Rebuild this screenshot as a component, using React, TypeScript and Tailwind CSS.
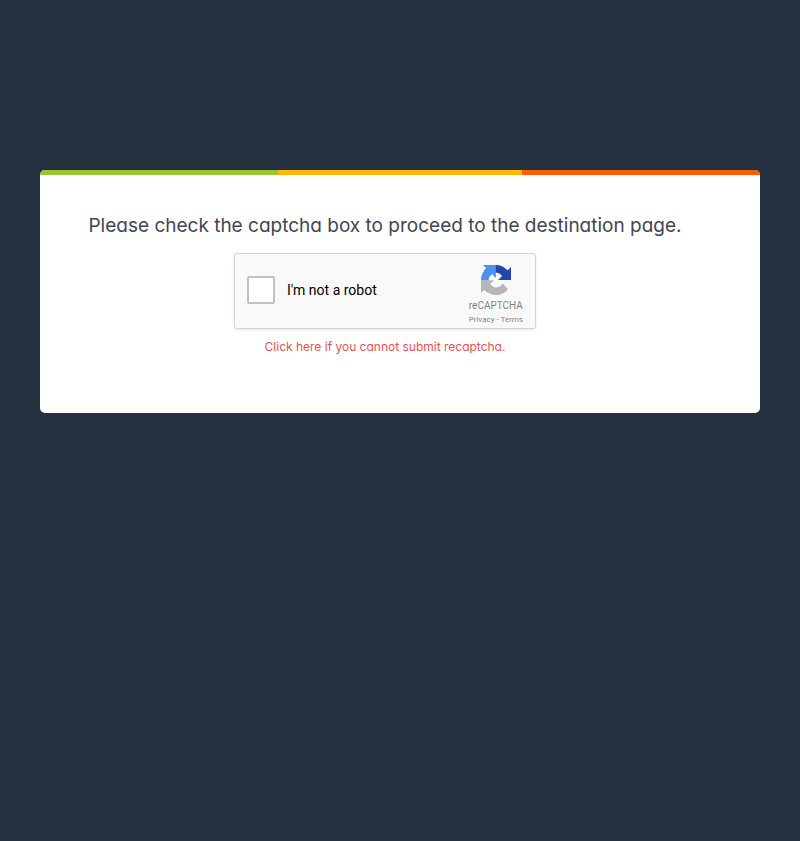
function RecaptchaLogo() {
  return (
    <svg viewBox="0 0 64 64" className="h-8 w-8 p-px" aria-hidden="true">
      <path
        fill="#2145ab"
        d="M64,31.955c-0.001,-0.46 -0.012,-0.918 -0.032,-1.373l0,-26.059l-7.205,7.204c-5.896,-7.218 -14.866,-11.824 -24.909,-11.824c-10.452,0 -19.738,4.987 -25.605,12.71l11.809,11.933c1.158,-2.14 2.802,-3.979 4.78,-5.365c2.058,-1.606 4.973,-2.918 8.991,-2.918c0.486,0 0.86,0.056 1.136,0.163c4.979,0.393 9.295,3.141 11.836,7.129l-8.359,8.36c10.588,-0.042 22.549,-0.066 27.558,0.04"
      />
      <path
        fill="#4a90ee"
        d="M31.862,0.094c-0.46,0.001 -0.918,0.012 -1.373,0.032l-26.059,0l7.204,7.205c-7.218,5.896 -11.824,14.866 -11.824,24.909c0,10.452 4.987,19.738 12.71,25.605l11.933,-11.809c-2.14,-1.158 -3.979,-2.802 -5.365,-4.78c-1.606,-2.058 -2.918,-4.973 -2.918,-8.991c0,-0.486 0.056,-0.86 0.163,-1.136c0.393,-4.979 3.141,-9.295 7.129,-11.836l8.36,8.359c-0.042,-10.588 -0.066,-22.549 0.04,-27.558"
      />
      <path
        fill="#b6b6b6"
        d="M0.001,32.24c0.001,0.46 0.012,0.918 0.032,1.373l0,26.059l7.205,-7.204c5.896,7.218 14.866,11.824 24.909,11.824c10.452,0 19.738,-4.987 25.605,-12.71l-11.809,-11.933c-1.158,2.14 -2.802,3.979 -4.78,5.365c-2.058,1.606 -4.973,2.918 -8.991,2.918c-0.486,0 -0.86,-0.056 -1.136,-0.163c-4.979,-0.393 -9.295,-3.141 -11.836,-7.129l8.359,-8.36c-10.588,0.042 -22.549,0.066 -27.558,-0.04"
      />
    </svg>
  );
}

function RecaptchaBox() {
  return (
    <div className="flex h-[76px] w-[302px] items-center justify-between rounded-[3px] border border-[#d3d3d3] bg-[#f9f9f9] px-3 font-[Roboto,sans-serif] shadow-[0_1px_3px_rgba(0,0,0,0.1)]">
      <div className="flex items-center gap-3 pb-0.5">
        <input
          id="not-a-robot"
          type="checkbox"
          className="h-7 w-7 appearance-none rounded-[2px] border-2 border-[#c1c1c1] bg-white checked:bg-[#4285f4]"
        />
        <label htmlFor="not-a-robot" className="text-sm text-black">
          I'm not a robot
        </label>
      </div>
      <div className="flex flex-col items-center pt-[7px] text-[#555]/75">
        <RecaptchaLogo />
        <span className="mt-1 text-[10px] leading-3">reCAPTCHA</span>
        <span className="mt-[3px] text-[8px] leading-[10px]">
          <a href="#privacy">Privacy</a> - <a href="#terms">Terms</a>
        </span>
      </div>
    </div>
  );
}

export default function App() {
  return (
    <div className="min-h-screen bg-[#26313f] px-10 pt-[170px] pb-10 font-[Inter,sans-serif] [font-feature-settings:'cv11']">
      <main className="overflow-hidden rounded-[5px] bg-white">
        <div className="flex h-[5px]">
          <div className="w-[33%] bg-[#9bc532]" />
          <div className="flex-1 bg-[#ffb70a]" />
          <div className="w-[33%] bg-[#ff5c00]" />
        </div>
        <div className="flex flex-col items-center pt-[37px] pr-[30px] pb-14">
          <h1 className="text-center text-[19px] leading-7 text-[#3f4555]">
            Please check the captcha box to proceed to the destination page.
          </h1>
          <div className="mt-[13px]">
            <RecaptchaBox />
          </div>
          <a href="#help" className="mt-2 text-xs leading-5 text-[#f05050]">
            Click here if you cannot submit recaptcha.
          </a>
        </div>
      </main>
    </div>
  );
}
